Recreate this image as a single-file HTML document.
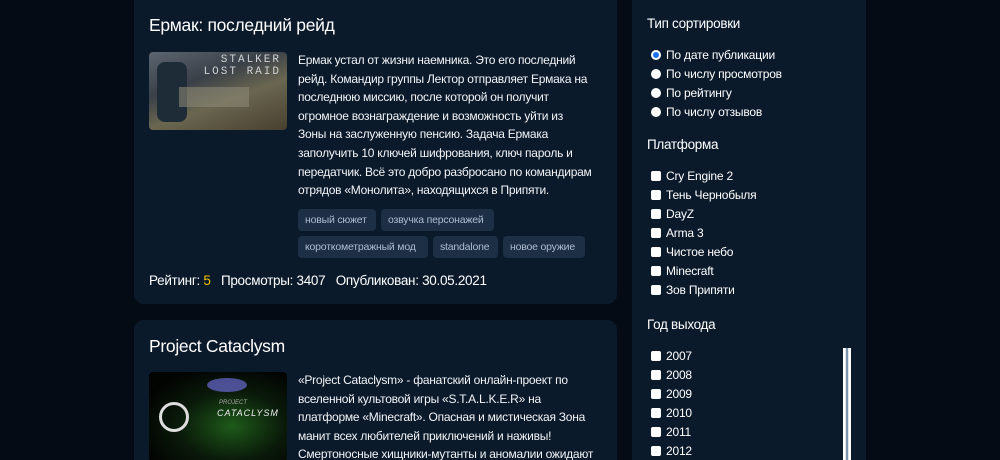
<!DOCTYPE html>
<html style="width:1000px;height:460px;overflow:hidden"><head><meta charset="utf-8"><style>
*{margin:0;padding:0;box-sizing:border-box}
body{width:1000px;height:460px;overflow:hidden;background:#050b15;font-family:"Liberation Sans","DejaVu Sans",sans-serif;color:#fff;position:relative}
.card{position:absolute;left:134px;width:483px;background:#0b1a2b;border-radius:10px}
.t{position:absolute;left:15px;font-size:17.5px;white-space:nowrap;letter-spacing:-0.3px}
.img{position:absolute;left:15px;width:138px;height:78px;border-radius:4px;overflow:hidden}
.txt{position:absolute;left:164px;width:312px;font-size:12px;line-height:18.6px;color:#f2f4f7;letter-spacing:-0.25px;white-space:nowrap}
.tag{position:absolute;height:22px;line-height:22px;background:#1c2f45;border-radius:4px;font-size:10.5px;color:#aebdd0;padding:0 7px;white-space:nowrap;letter-spacing:-0.2px}
.meta{position:absolute;left:15px;font-size:13.5px;white-space:nowrap;letter-spacing:-0.3px}
.side{position:absolute;left:632px;top:-10px;width:234px;height:480px;background:#0b1a2b;border-radius:10px}
.h{position:absolute;left:15px;font-size:13.5px;letter-spacing:-0.3px}
.it{position:absolute;left:19px;font-size:12px;white-space:nowrap;line-height:14px;letter-spacing:-0.2px}
.cb{display:inline-block;width:10px;height:10px;background:#fff;border-radius:2px;vertical-align:-1px;margin-right:5px}
.rb{display:inline-block;width:10px;height:10px;background:#fff;border-radius:50%;vertical-align:-1px;margin-right:5px}
</style></head><body>
<div class="card" style="top:-10px;height:314px">
<div class="t" style="top:25px">Ермак: последний рейд</div>
<div class="img" style="top:62px;background:linear-gradient(160deg,#5c6570 0%,#3a4048 35%,#6a6650 60%,#47402f 100%)">
<div style="position:absolute;left:8px;top:10px;width:30px;height:60px;background:#1e2c38;border-radius:8px"></div>
<div style="position:absolute;left:30px;top:35px;width:70px;height:20px;background:#8a8775;opacity:.6"></div>
<div style="position:absolute;right:6px;top:2px;font-size:11px;color:#cfd2d4;letter-spacing:2px;font-family:'Liberation Mono',monospace;line-height:12px;text-align:right">STALKER<br>LOST RAID</div>
</div>
<div class="txt" style="top:61px">Ермак устал от жизни наемника. Это его последний<br>рейд. Командир группы Лектор отправляет Ермака на<br>последнюю миссию, после которой он получит<br>огромное вознаграждение и возможность уйти из<br>Зоны на заслуженную пенсию. Задача Ермака<br>заполучить 10 ключей шифрования, ключ пароль и<br>передатчик. Всё это добро разбросано по командирам<br>отрядов «Монолита», находящихся в Припяти.</div>
<div class="tag" style="left:164px;top:219px;width:78px">новый сюжет</div>
<div class="tag" style="left:247px;top:219px;width:113px">озвучка персонажей</div>
<div class="tag" style="left:164px;top:246px;width:130px">короткометражный мод</div>
<div class="tag" style="left:299px;top:246px;width:65px">standalone</div>
<div class="tag" style="left:369px;top:246px;width:82px">новое оружие</div>
<div class="meta" style="top:283px">Рейтинг: <span style="color:#f5c400">5</span>&nbsp;&nbsp; Просмотры: 3407 &nbsp;&nbsp;Опубликован: 30.05.2021</div>
</div>
<div class="card" style="top:320px;height:160px">
<div class="t" style="top:16px">Project Cataclysm</div>
<div class="img" style="top:52px;height:90px;background:radial-gradient(ellipse at 60% 60%,#1e5a1a 0%,#0a1a0a 45%,#020402 80%)">
<div style="position:absolute;left:58px;top:6px;width:40px;height:14px;background:#6a6ad0;border-radius:50%;opacity:.7"></div>
<div style="position:absolute;left:10px;top:30px;width:30px;height:30px;border:3px solid #ddd;border-radius:50%"></div>
<div style="position:absolute;left:70px;top:28px;font-size:6px;color:#aaa;font-style:italic">PROJECT</div>
<div style="position:absolute;left:68px;top:36px;font-size:9px;color:#eee;font-style:italic;letter-spacing:1px">CATACLYSM</div>
</div>
<div class="txt" style="top:51px">«Project Cataclysm» - фанатский онлайн-проект по<br>вселенной культовой игры «S.T.A.L.K.E.R» на<br>платформе «Minecraft». Опасная и мистическая Зона<br>манит всех любителей приключений и наживы!<br>Смертоносные хищники-мутанты и аномалии ожидают</div>
</div>
<div class="side">
<div class="h" style="top:26px">Тип сортировки</div>
<div class="it" style="top:58px"><span class="rb" style="background:#1a73f5;box-shadow:inset 0 0 0 2px #fff"></span>По дате публикации</div>
<div class="it" style="top:77px"><span class="rb"></span>По числу просмотров</div>
<div class="it" style="top:96px"><span class="rb"></span>По рейтингу</div>
<div class="it" style="top:115px"><span class="rb"></span>По числу отзывов</div>
<div class="h" style="top:147px">Платформа</div>
<div class="it" style="top:179px"><span class="cb"></span>Cry Engine 2</div>
<div class="it" style="top:198px"><span class="cb"></span>Тень Чернобыля</div>
<div class="it" style="top:217px"><span class="cb"></span>DayZ</div>
<div class="it" style="top:236px"><span class="cb"></span>Arma 3</div>
<div class="it" style="top:255px"><span class="cb"></span>Чистое небо</div>
<div class="it" style="top:274px"><span class="cb"></span>Minecraft</div>
<div class="it" style="top:293px"><span class="cb"></span>Зов Припяти</div>
<div class="h" style="top:327px">Год выхода</div>
<div class="it" style="top:359px"><span class="cb"></span>2007</div>
<div class="it" style="top:378px"><span class="cb"></span>2008</div>
<div class="it" style="top:397px"><span class="cb"></span>2009</div>
<div class="it" style="top:416px"><span class="cb"></span>2010</div>
<div class="it" style="top:435px"><span class="cb"></span>2011</div>
<div class="it" style="top:454px"><span class="cb"></span>2012</div>
<div style="position:absolute;left:211px;top:358px;width:8px;height:130px;background:#dfe6ee;border-left:2px solid #fff;border-right:2px solid #fff"><div style="margin:0 auto;width:2px;height:100%;background:#7d93ac"></div></div>
</div>
</body></html>
